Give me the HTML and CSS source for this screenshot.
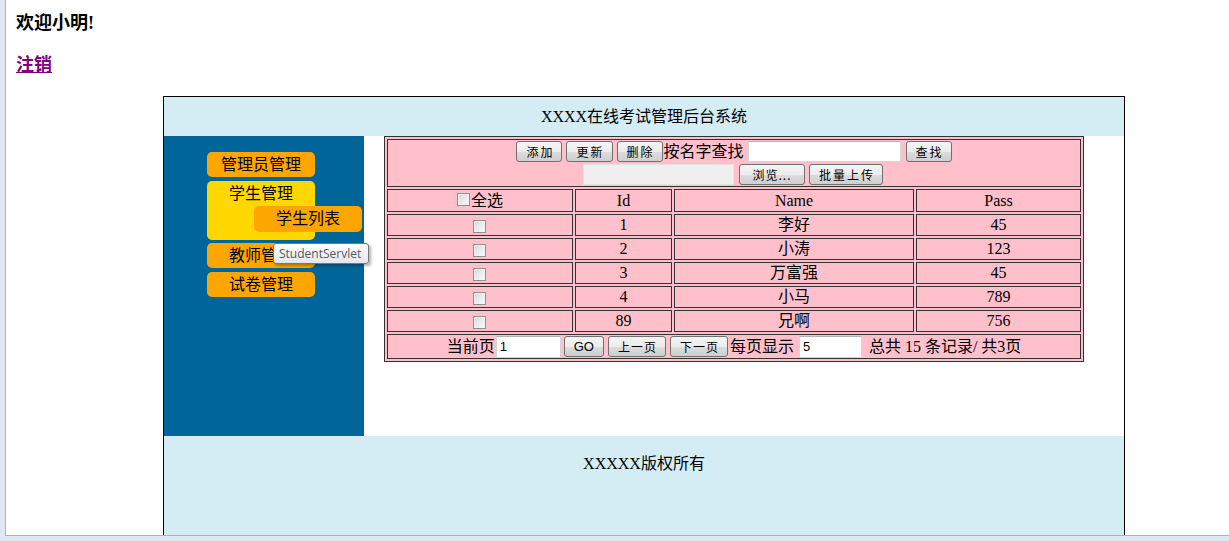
FILE: index.html
```html
<!DOCTYPE html>
<html>
<head>
    <meta charset="UTF-8">
    <title>后台管理</title>
    <link rel="stylesheet" href="styles.css">
</head>
<body>
<div class="viewport">
    <h3 class="welcome">欢迎小明!</h3>
    <h3 class="logout"><a href="#">注销</a></h3>

    <div class="admin">
        <div class="top">XXXX在线考试管理后台系统</div>
        <div class="main">
            <div class="side">
                <ul class="menu">
                    <li>管理员管理</li>
                    <li class="open">
                        <div class="title">学生管理</div>
                        <ul class="sub">
                            <li>学生列表</li>
                        </ul>
                    </li>
                    <li>教师管理</li>
                    <li>试卷管理</li>
                </ul>
                <div class="tip">StudentServlet</div>
            </div>
            <div class="content">
                <table class="grid">
                    <colgroup>
                        <col class="c1">
                        <col class="c2">
                        <col class="c3">
                        <col class="c4">
                    </colgroup>
                    <tr class="tools">
                        <td colspan="4">
                            <div class="bar">
                                <button class="btn">添加</button>
                                <button class="btn">更新</button>
                                <button class="btn">删除</button>
                                <span class="label">按名字查找</span>
                                <input type="text" class="field search">
                                <button class="btn">查找</button>
                            </div>
                            <div class="bar">
                                <input type="text" class="field file" disabled>
                                <button class="btn browse">浏览...</button>
                                <button class="btn">批量上传</button>
                            </div>
                        </td>
                    </tr>
                    <tr class="head">
                        <th><input type="checkbox" class="check"><span>全选</span></th>
                        <th>Id</th>
                        <th>Name</th>
                        <th>Pass</th>
                    </tr>
                    <tr><td><input type="checkbox" class="check"></td><td>1</td><td>李好</td><td>45</td></tr>
                    <tr><td><input type="checkbox" class="check"></td><td>2</td><td>小涛</td><td>123</td></tr>
                    <tr><td><input type="checkbox" class="check"></td><td>3</td><td>万富强</td><td>45</td></tr>
                    <tr><td><input type="checkbox" class="check"></td><td>4</td><td>小马</td><td>789</td></tr>
                    <tr><td><input type="checkbox" class="check"></td><td>89</td><td>兄啊</td><td>756</td></tr>
                    <tr class="pager">
                        <td colspan="4">
                            <div class="bar">
                                <span class="label">当前页</span>
                                <input type="text" class="field page" value="1">
                                <button class="btn go">GO</button>
                                <button class="btn">上一页</button>
                                <button class="btn">下一页</button>
                                <span class="label">每页显示</span>
                                <input type="text" class="field size" value="5">
                                <span class="label total">总共 15 条记录/ 共3页</span>
                            </div>
                        </td>
                    </tr>
                </table>
            </div>
        </div>
        <div class="foot">XXXXX版权所有</div>
    </div>
</div>
</body>
</html>
```

FILE: styles.css
```css
html {
    background-color: #dfe6f4;
}
body {
    margin: 0;
    font-family: "Liberation Serif", "Noto Sans CJK SC", serif;
    font-size: 16px;
    color: #000;
}
.viewport {
    margin-left: 5px;
    height: 523px;
    padding: 12px 0 0 10px;
    background-color: #fff;
    border-left: 1px solid #a9b1c3;
    border-bottom: 1px solid #a9b1c3;
    overflow: hidden;
}
.welcome, .logout {
    font-size: 18px;
    line-height: 22px;
    margin: 0 0 20px;
}
.logout a {
    color: #800080;
}

.admin {
    width: 960px;
    margin-left: 147px;
    border: 1px solid #000;
}
.top {
    height: 39px;
    line-height: 39px;
    text-align: center;
    background-color: #d4edf4;
}
.main {
    display: flex;
}
.side {
    position: relative;
    width: 200px;
    height: 300px;
    background-color: #006699;
}
.content {
    flex: 1;
    padding-left: 20px;
    background-color: #fff;
}
.foot {
    height: 100px;
    box-sizing: border-box;
    padding-top: 19px;
    line-height: 18px;
    text-align: center;
    background-color: #d4edf4;
}

/* side menu */
.menu {
    list-style: none;
    margin: 0;
    padding: 16px 0 0 43px;
}
.menu li {
    width: 108px;
    margin-bottom: 4px;
    line-height: 25px;
    text-align: center;
    background-color: #ffa500;
    border-radius: 5px;
}
.menu li.open {
    background-color: #ffd700;
    padding: 3px 0 8px;
    margin-bottom: 3px;
}
.menu .title {
    line-height: 20px;
}
.sub {
    list-style: none;
    margin: 2px 0 0 47px;
    padding: 0;
}
.sub li {
    line-height: 26px;
    margin: 0;
}
.tip {
    position: absolute;
    left: 109px;
    top: 107px;
    width: 96px;
    height: 21px;
    box-sizing: border-box;
    padding-left: 5px;
    font-family: "Open Sans", "Noto Sans", sans-serif;
    font-size: 12px;
    line-height: 19px;
    color: #575757;
    background: linear-gradient(#ffffff, #e4e5f0);
    border: 1px solid #767676;
    border-radius: 3px;
    box-shadow: 2px 2px 3px rgba(0, 0, 0, 0.3);
}

/* grid */
.grid {
    width: 700px;
    table-layout: fixed;
    border: 1px solid #333;
    border-spacing: 2px;
    background-color: #ffc0cb;
}
.grid .c1 { width: 186px; }
.grid .c2 { width: 97px; }
.grid .c3 { width: 240px; }
.grid .c4 { width: 165px; }
.grid td, .grid th {
    border: 1px solid #333;
    padding: 0;
    text-align: center;
    font-weight: normal;
    line-height: 18px;
}
.grid tr {
    height: 22px;
}
.grid tr.head {
    height: 23px;
}
.grid tr.tools {
    height: 48px;
}
.grid tr.pager {
    height: 25px;
}
.bar {
    display: flex;
    justify-content: center;
    align-items: center;
    height: 23px;
}
.label {
    white-space: pre;
}

.btn {
    height: 21px;
    box-sizing: border-box;
    margin: 0 2px;
    padding: 0 7px 0 9px;
    font-family: "Noto Sans CJK SC", sans-serif;
    font-size: 12px;
    line-height: 1;
    letter-spacing: 2px;
    color: #000;
    background: linear-gradient(#f4f4f4 0%, #ececec 50%, #dddddd 51%, #cfcfcf 100%);
    border: 1px solid #707070;
    border-radius: 3px;
}
.btn.browse {
    width: 66px;
    letter-spacing: 1px;
    padding: 0;
}
.pager .btn {
    letter-spacing: 1px;
    padding: 0 8px 0 9px;
}
.pager .btn.go {
    padding: 0 9px;
    font-family: "Liberation Sans", sans-serif;
    font-size: 13px;
    letter-spacing: 0;
}
.tools .bar .label {
    margin-left: -1px;
}

.field {
    height: 21px;
    box-sizing: border-box;
    padding: 0 3px;
    font-family: "Liberation Sans", sans-serif;
    font-size: 13px;
    background-color: #fff;
    border: 1px solid #d6d6d6;
    border-top-color: #b5b5b5;
}
.field.search {
    width: 153px;
    margin: 0 3px 0 4px;
}
.field.file {
    width: 151px;
    margin-right: 3px;
    background-color: #efefef;
    border-color: #e2e2e2;
}
.field.page {
    width: 65px;
    margin: 0 1px;
    height: 22px;
}
.field.size {
    width: 63px;
    margin: 0 7px 0 5px;
    height: 22px;
}

.check {
    appearance: none;
    -webkit-appearance: none;
    width: 13px;
    height: 13px;
    margin: 0 0 0 -2px;
    vertical-align: middle;
    border: 1px solid #8e8f8f;
    background: linear-gradient(135deg, #d8d8d8, #fbfbfb);
    box-shadow: inset 0 0 0 1px #f2f2f2;
}
.head .check {
    margin: 0 1px 0 0;
    position: relative;
    top: -2px;
}
```
